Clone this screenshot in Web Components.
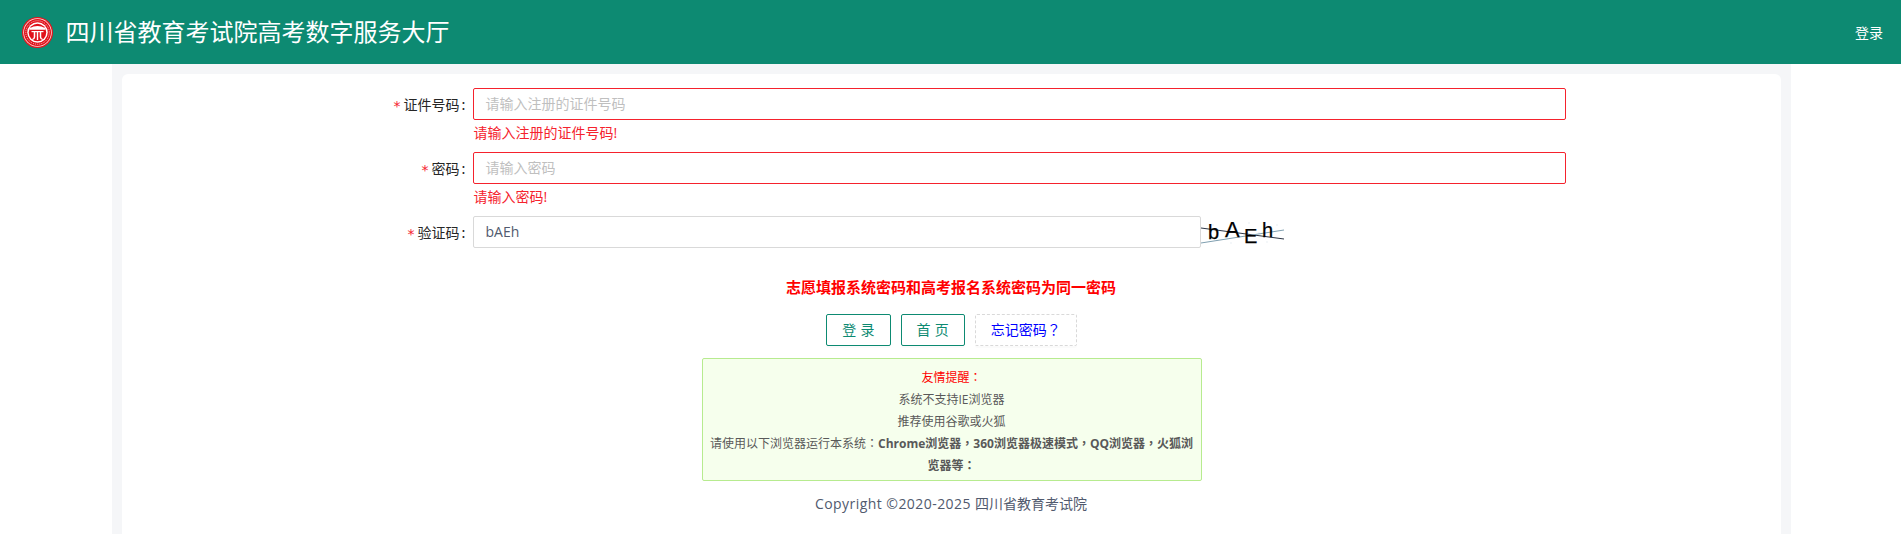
<!DOCTYPE html>
<html lang="zh-CN">
<head>
<meta charset="utf-8">
<title>四川省教育考试院高考数字服务大厅</title>
<style>
html,body{margin:0;padding:0;background:#fff;}
body{font-family:"Open Sans","Noto Sans CJK SC",sans-serif;font-size:14px;color:#595959;height:534px;overflow:hidden;}
.p{font-family:"Noto Sans CJK TC",sans-serif;line-height:0;}
b{line-height:0;}
</style>
</head>
<body>
<exam-app>
  <app-header slot="header" title-text="四川省教育考试院高考数字服务大厅" action="登录"></app-header>
  <form-row label="证件号码" error="请输入注册的证件号码!"><text-field placeholder="请输入注册的证件号码" invalid></text-field></form-row>
  <form-row label="密码" error="请输入密码!"><text-field placeholder="请输入密码" invalid></text-field></form-row>
  <form-row label="验证码" captcha><text-field value="bAEh"></text-field><captcha-image slot="after"></captcha-image></form-row>
  <password-note>志愿填报系统密码和高考报名系统密码为同一密码</password-note>
  <action-bar>
    <app-button>登 录</app-button>
    <app-button>首 页</app-button>
    <app-button kind="dashed">忘记密码<span class="p" lang="zh-TW">？</span></app-button>
  </action-bar>
  <notice-box>
    <div style="color:#f00">友情提醒<span class="p" lang="zh-TW">：</span></div>
    <div>系统不支持IE浏览器</div>
    <div>推荐使用谷歌或火狐</div>
    <div>请使用以下浏览器运行本系统<span class="p" lang="zh-TW">：</span><b>Chrome浏览器<span class="p" lang="zh-TW">，</span>360浏览器极速模式<span class="p" lang="zh-TW">，</span>QQ浏览器<span class="p" lang="zh-TW">，</span>火狐浏<br>览器等<span class="p" lang="zh-TW">：</span></b></div>
  </notice-box>
  <page-footer><span style="letter-spacing:.45px">Copyright ©2020-2025 </span>四川省教育考试院</page-footer>
</exam-app>
<script>
customElements.define('exam-app', class extends HTMLElement {
  constructor(){
    super();
    this.attachShadow({mode:'open'}).innerHTML = `<style>
      :host{display:block;height:534px;overflow:hidden;}
      .outer{display:flex;justify-content:center;padding-left:1px;}
      .wrap{width:1659px;padding:10px;background:#f5f6f8;height:450px;}
      .card{background:#fff;border-radius:6px;padding-top:14px;height:456px;}
    </style>
    <slot name="header"></slot>
    <div class="outer"><div class="wrap"><div class="card"><slot></slot></div></div></div>`;
  }
});
customElements.define('app-header', class extends HTMLElement {
  constructor(){
    super();
    this.attachShadow({mode:'open'}).innerHTML = `<style>
      :host{display:flex;align-items:center;height:64px;background:#0d8a72;color:#fff;padding:0 18px 0 22px;}
      svg{width:31px;height:31px;flex:none;}
      h1{margin:0 0 0 12.5px;font-weight:400;font-size:24px;line-height:32px;flex:1;}
      a{font-size:14px;color:#fff;}
    </style>
    <svg viewBox="0 0 62 62" aria-hidden="true">
      <circle cx="31" cy="31" r="31" fill="#e8141e"/>
      <circle cx="31" cy="31" r="28.5" fill="#fbe3e0"/>
      <circle cx="31" cy="31" r="27" fill="#e0101a"/>
      <circle cx="31" cy="31" r="23.5" fill="none" stroke="#f8c4c2" stroke-width="2" stroke-dasharray="2 2"/>
      <circle cx="31" cy="31" r="20.5" fill="#fff"/>
      <circle cx="31" cy="31" r="17.5" fill="#e0101a"/>
      <g fill="#fff">
        <path d="M15 22.5 Q31 13 47 22.5 L47 25.5 L15 25.5Z"/>
        <rect x="19" y="28" width="24" height="2.4"/>
        <path d="M23.5 30 h3 v10 q0 4 -5 6 l-1.6 -2 q3.6 -1.4 3.6 -4z"/>
        <rect x="29.6" y="30" width="2.8" height="16"/>
        <path d="M35.5 30 h3 v10 q0 2.6 3.6 4 l-1.6 2 q-5 -2 -5 -6z"/>
      </g>
    </svg>
    <h1>${this.getAttribute('title-text')}</h1><a>${this.getAttribute('action')}</a>`;
  }
});
customElements.define('form-row', class extends HTMLElement {
  constructor(){
    super();
    const err = this.getAttribute('error');
    this.attachShadow({mode:'open'}).innerHTML = `<style>
      :host{display:grid;grid-template-columns:351px 1093px;height:64px;}
      label{display:flex;justify-content:flex-end;align-items:center;height:32px;color:#262626;font-size:14px;}
      .star{color:#f5222d;font-family:"DejaVu Sans",sans-serif;font-size:14px;line-height:1;margin-right:3px;display:inline-block;transform:translateY(2px);}
      .colon{margin:0 7px 0 2px;font-family:"Noto Sans CJK SC",sans-serif;}
      .ctl{display:flex;height:32px;}
      .ctl ::slotted(text-field){width:${this.hasAttribute('captcha') ? '728px' : '100%'};}
      .err{color:#f5222d;font-size:14px;line-height:22px;margin-top:2px;padding-left:1px;}
    </style>
    <label><span class="star">*</span>${this.getAttribute('label')}<span class="colon">:</span></label>
    <div><div class="ctl"><slot></slot><slot name="after"></slot></div>${err ? `<div class="err">${err}</div>` : ''}</div>`;
  }
});
customElements.define('text-field', class extends HTMLElement {
  constructor(){
    super();
    const bad = this.hasAttribute('invalid');
    const ph = this.getAttribute('placeholder');
    const v = this.getAttribute('value');
    this.attachShadow({mode:'open'}).innerHTML = `<style>
      :host{display:block;box-sizing:border-box;height:32px;}
      .box{box-sizing:border-box;height:32px;line-height:30px;padding:0 12px;border:1px solid ${bad ? '#f5222d' : '#d9d9d9'};border-radius:2px;background:#fff;font-size:14px;color:${v ? '#515a6e' : '#bfbfbf'};}
    </style><div class="box" role="textbox">${v || ph}</div>`;
  }
});
customElements.define('captcha-image', class extends HTMLElement {
  constructor(){
    super();
    this.attachShadow({mode:'open'}).innerHTML = `<style>
      :host{display:block;width:83px;height:32px;flex:none;}
      svg{display:block;}
      text{font-family:"Liberation Sans",sans-serif;font-size:20px;fill:#000;stroke:#000;stroke-width:.25px;}
    </style>
    <svg width="83" height="32" viewBox="0 0 83 32">
      <g fill="#dfe8ee"><circle cx="12" cy="9" r=".7"/><circle cx="30" cy="27" r=".7"/><circle cx="48" cy="7" r=".7"/><circle cx="66" cy="26" r=".7"/><circle cx="76" cy="9" r=".7"/><circle cx="58" cy="17" r=".7"/></g>
      <path d="M0 12 L83 23" stroke="#2c3545" stroke-width="1" fill="none"/>
      <path d="M0 27 L83 14" stroke="#7f9fb0" stroke-width="1" fill="none"/>
      <text x="7" y="23">b</text>
      <text x="24" y="21" style="font-size:22px">A</text>
      <text x="43" y="27">E</text>
      <text x="61" y="21">h</text>
    </svg>`;
  }
});
customElements.define('password-note', class extends HTMLElement {
  constructor(){
    super();
    this.attachShadow({mode:'open'}).innerHTML = `<style>
      :host{display:block;text-align:center;margin-top:-4px;font-size:15px;line-height:22px;font-weight:700;color:#f00;}
    </style><slot></slot>`;
  }
});
customElements.define('action-bar', class extends HTMLElement {
  constructor(){
    super();
    this.attachShadow({mode:'open'}).innerHTML = `<style>
      :host{display:flex;justify-content:center;gap:10px;margin:16px 0 12px;padding-left:1px;}
    </style><slot></slot>`;
  }
});
customElements.define('app-button', class extends HTMLElement {
  constructor(){
    super();
    const dashed = this.getAttribute('kind') === 'dashed';
    this.attachShadow({mode:'open'}).innerHTML = `<style>
      :host{display:block;box-sizing:border-box;height:32px;line-height:30px;padding:0 15px;font-size:14px;white-space:pre;word-spacing:.5px;
        border:1px ${dashed ? 'dashed #d9d9d9' : 'solid #0d8a72'};border-radius:2px;color:${dashed ? '#00f' : '#0d8a72'};
        box-shadow:0 2px 0 rgba(0,0,0,.015);}
    </style><slot></slot>`;
  }
});
customElements.define('notice-box', class extends HTMLElement {
  constructor(){
    super();
    this.attachShadow({mode:'open'}).innerHTML = `<style>
      :host{display:block;box-sizing:border-box;width:500px;margin-left:580px;padding:8px 7px 3px;border:1px solid #b7eb8f;border-radius:2px;background:#f6ffed;
        text-align:center;font-size:12px;line-height:22px;color:#595959;}
    </style><slot></slot>`;
  }
});
customElements.define('page-footer', class extends HTMLElement {
  constructor(){
    super();
    this.attachShadow({mode:'open'}).innerHTML = `<style>
      :host{display:block;text-align:center;margin-top:12px;font-size:14px;line-height:22px;color:#515a6e;}
    </style><slot></slot>`;
  }
});
</script>
</body>
</html>
